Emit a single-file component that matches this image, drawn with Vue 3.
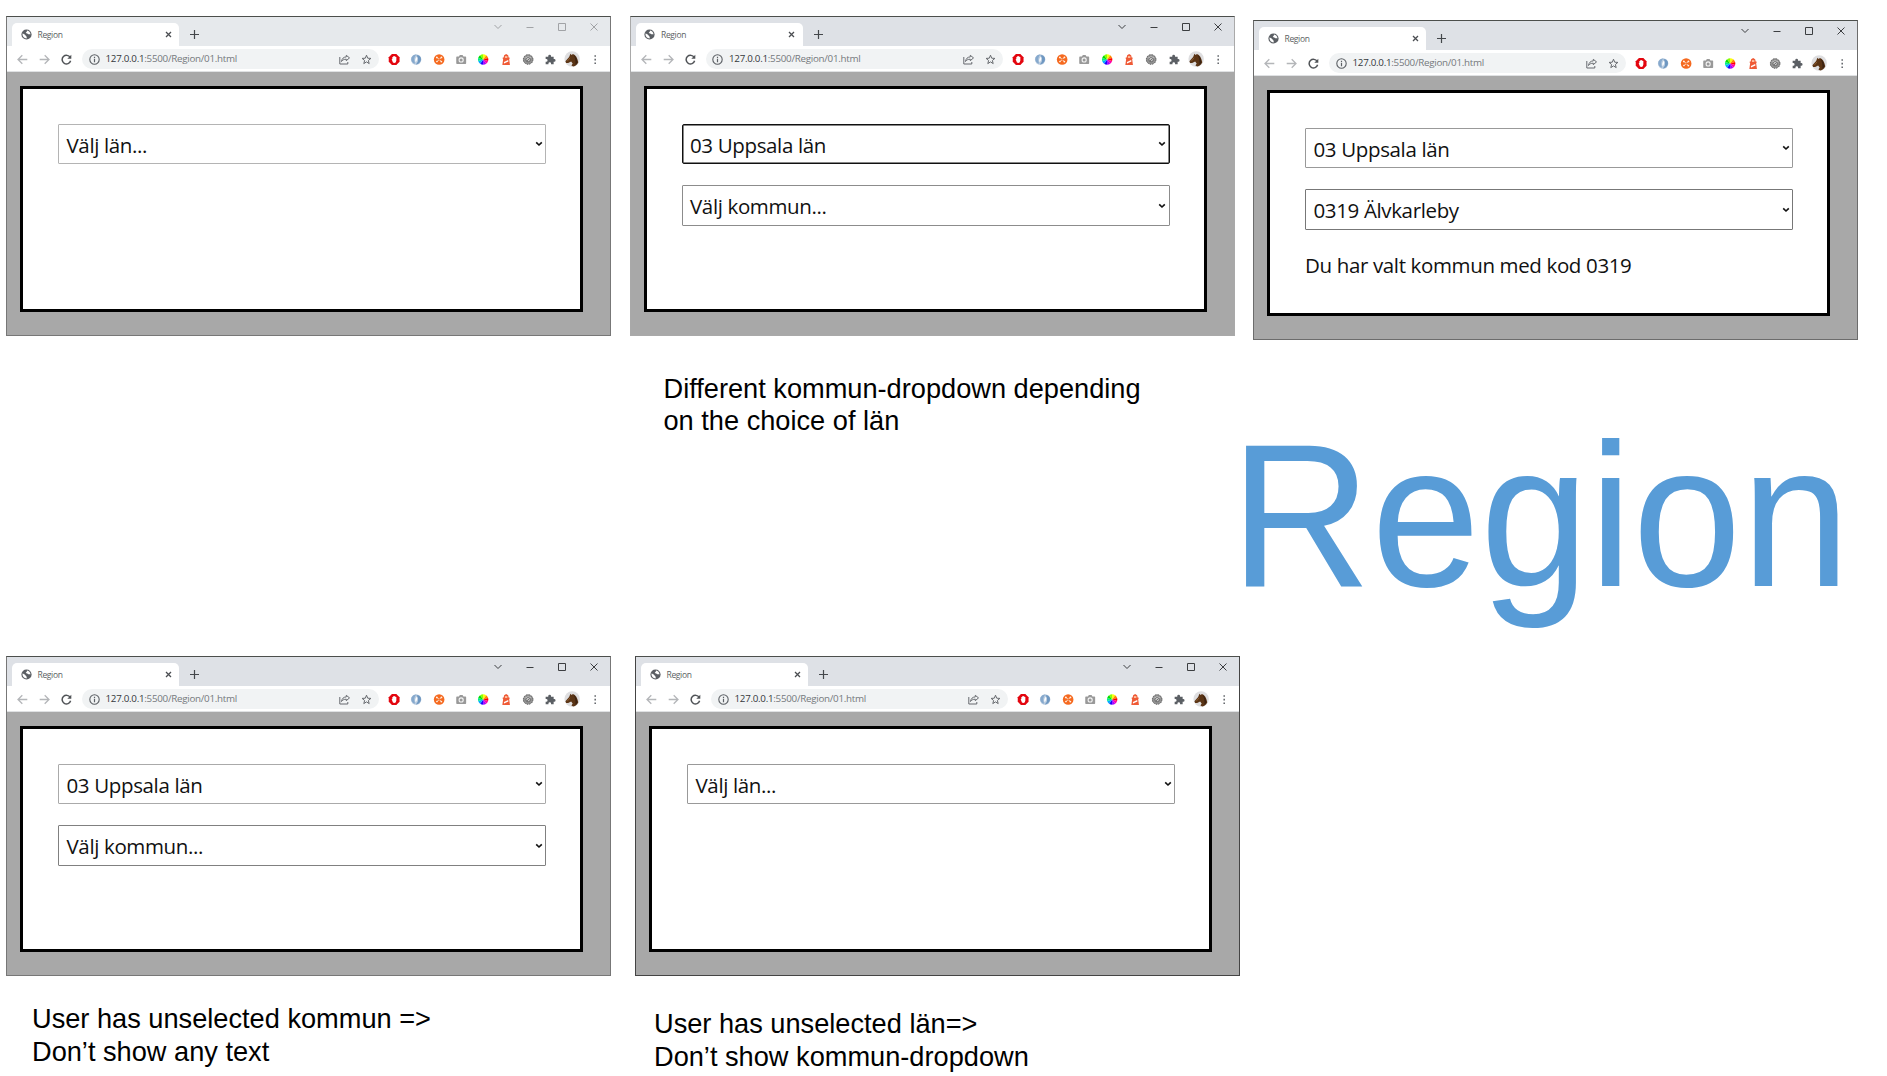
<script setup>
const windows = {
  start: { faded: true, edge: '#777', selects: [{ text: 'Välj län...', tone: '#b4b4b4' }] },
  lan: {
    edge: '#a9a9a9',
    selects: [
      { text: '03 Uppsala län', tone: '#101010', focus: true },
      { text: 'Välj kommun...', tone: '#8c8c8c' },
    ],
  },
  kommun: {
    edge: '#6c6c6c',
    selects: [
      { text: '03 Uppsala län', tone: '#999' },
      { text: '0319 Älvkarleby', tone: '#777' },
    ],
    message: 'Du har valt kommun med kod 0319',
  },
  noKommun: {
    edge: '#777',
    selects: [
      { text: '03 Uppsala län', tone: '#aaa' },
      { text: 'Välj kommun...', tone: '#808080' },
    ],
  },
  noLan: { edge: '#444', selects: [{ text: 'Välj län...', tone: '#999' }] },
}

const rows = [
  [
    { id: 'w1', win: windows.start },
    { id: 'w2', win: windows.lan, caption: ['Different kommun-dropdown depending', 'on the choice of län'] },
    { id: 'w3', win: windows.kommun, title: 'Region' },
  ],
  [
    { id: 'w4', win: windows.noKommun, caption: ['User has unselected kommun =>', 'Don’t show any text'] },
    { id: 'w5', win: windows.noLan, caption: ['User has unselected län=>', 'Don’t show kommun-dropdown'] },
  ],
]

const wheel = ['#ff0', '#f80', '#f00', '#f0a', '#a0f', '#20f', '#0af', '#0e8', '#0d0', '#8f0']
const wedge = (i) => {
  const p = (k) => {
    const a = (k / 10) * Math.PI * 2 - Math.PI / 2
    return `${(5.5 + 5.2 * Math.cos(a)).toFixed(2)} ${(5.5 + 5.2 * Math.sin(a)).toFixed(2)}`
  }
  return `M5.5 5.5L${p(i)}A5.2 5.2 0 0 1 ${p(i + 1)}Z`
}
</script>

<template>
  <main class="slide">
    <section v-for="(row, r) in rows" :key="r" class="row" :class="'row-' + (r + 1)">
      <figure v-for="item in row" :key="item.id" :class="item.id">
        <div class="window" :class="{ faded: item.win.faded }" :style="{ borderColor: item.win.edge }">
          <header class="tabs">
            <div class="tab">
              <svg class="globe" width="11" height="11" viewBox="0 0 11 11">
                <circle cx="5.5" cy="5.5" r="5.1" fill="#5a5e63" />
                <path d="M1.500 4.600C2.800 5 3.600 5.400 4.400 6.200c.7.6.5 1.200 1.300 1.400v1.900C3 9.500 1.300 7.300 1.500 4.600zM6 1.400c-.4 1 .2 1.200-.8 1.800-.7.4-.2 1 .5 1 .9.100.9.900 1.700 1.100.8.100 1.300-.1 2.100.1-.1-2.200-1.500-3.700-3.500-4z" fill="#fff" />
              </svg>
              <span class="tab-name">Region</span>
              <svg class="tab-close" width="7" height="7" viewBox="0 0 7 7"><path d="M1 1l5 5M6 1L1 6" stroke="#4b4e52" stroke-width="1.300" /></svg>
            </div>
            <svg class="plus" width="9" height="9" viewBox="0 0 9 9"><path d="M4.500 0v9M0 4.500h9" stroke="#44474b" stroke-width="1.200" /></svg>
            <div class="controls">
              <svg viewBox="0 0 10 10"><path d="M1.500 3l3.500 3.500L8.500 3" /></svg>
              <svg viewBox="0 0 10 10"><path d="M1.500 5.500h7" /></svg>
              <svg viewBox="0 0 10 10"><path d="M1.500 1.500h7v7h-7z" /></svg>
              <svg viewBox="0 0 10 10"><path d="M1.500 1.500l7 7M8.500 1.500l-7 7" /></svg>
            </div>
          </header>

          <nav class="toolbar">
            <div class="nav">
              <svg viewBox="0 0 11 11"><path d="M10.300 5.500H1M5.300 1.200L1 5.500l4.300 4.300" stroke="#b4b6b9" /></svg>
              <svg viewBox="0 0 11 11"><path d="M.7 5.500H10M5.700 1.200L10 5.500 5.700 9.800" stroke="#b4b6b9" /></svg>
              <svg viewBox="0 0 11 11"><path d="M9.200 3.500A4.300 4.300 0 1 0 9.600 6.800" stroke="#505357" stroke-width="1.500" /><path d="M10.300.7v4H6.300z" fill="#505357" stroke="none" /></svg>
            </div>
            <div class="address">
              <svg class="info" width="11" height="11" viewBox="0 0 11 11"><circle cx="5.500" cy="5.500" r="4.700" fill="none" stroke="#5c6065" stroke-width="1.100" /><path d="M5.500 4.800v3.400M5.500 2.700v1.200" stroke="#5c6065" stroke-width="1.200" /></svg>
              <span class="url"><b>127.0.0.1</b>:5500/Region/01.html</span>
              <svg class="share" width="11" height="11" viewBox="0 0 11 11"><path d="M.8 3v7h8V8" /><path d="M10.500 3.900L7.300 1.300v1.600C4.500 3 3 4.600 2.500 7.500 3.600 5.900 5 5.200 7.300 5.200v1.500z" /></svg>
              <svg class="star" width="11" height="11" viewBox="0 0 11 11"><path d="M5.500 1.200l1.200 3 3.200.2-2.500 2.100.8 3.100-2.700-1.700-2.700 1.700.8-3.100L1.100 4.400l3.200-.2z" /></svg>
            </div>
            <div class="extensions">
              <svg viewBox="0 0 11 11"><path d="M3.300.1h4.400l3.200 3.200v4.400l-3.200 3.200H3.300L.1 7.700V3.300z" fill="#e3060f" /><path d="M3 5.300L3.700 5V3h.8V2.300h.8V2h.7v.4h.9V3h.8v3.500L7 8.400 5.600 9 4.300 8.500z" fill="#fff" /></svg>
              <svg viewBox="0 0 11 11"><circle cx="5.500" cy="5.500" r="5.200" fill="#b9cce0" /><path d="M1 3.300A5 5 0 0 1 5.700.5C3.500 2.500 3.100 5.500 4.400 9.800 1.100 9 .1 6 1 3.300z" fill="#86a9cd" /><path d="M5.800 1c4 .2 5.200 3 4.300 5.800C9.300 9.300 7 10.400 5 10.400 8 8 8.200 4.900 5.800 1z" fill="#6e97c1" /><path d="M6.400 2.800C7.100 5 6.300 7 4.900 8.300 4.200 6 4.500 4.100 6.400 2.800z" fill="#fff" /></svg>
              <svg viewBox="0 0 11 11"><circle cx="5.500" cy="5.500" r="5.300" fill="#f5691f" /><path d="M3.200 3.200l4.600 4.600M7.800 3.200L3.200 7.800" stroke="#ffe5d2" stroke-width="1" /><circle cx="3.200" cy="3.400" r=".9" fill="#fff1e6" /><circle cx="7.800" cy="3.400" r=".9" fill="#fff1e6" /><circle cx="3.300" cy="7.600" r=".8" fill="#fff1e6" /><circle cx="7.700" cy="7.600" r=".9" fill="#fff1e6" /><circle cx="5.500" cy="5.500" r=".8" fill="#f5691f" /></svg>
              <svg viewBox="0 0 11 11"><path d="M1.300 2.500h2L4.200 1h2.700l.9 1.500h2q.7 0 .7.700v6q0 .7-.7.700H1.300q-.7 0-.7-.7v-6q0-.7.700-.7z" fill="#999" /><circle cx="5.500" cy="5.900" r="2.600" fill="#f4f4f4" /><circle cx="5.500" cy="5.900" r="1.500" fill="#999" /></svg>
              <svg viewBox="0 0 11 11"><path v-for="(c, i) in wheel" :key="c" :d="wedge(i)" :fill="c" /></svg>
              <svg viewBox="0 0 11 11"><path d="M3 3.400L3.500 1.200 5.500.1l2 1.100L8 3.400h.9v1.500H8.500l.8 6H1.700l.8-6H2.100V3.400z" fill="#ef5a36" /><path d="M4.300 2.300h2.400v1.500H4.300z" fill="#ffd9b8" /><path d="M3.300 7.900l4.200-2 .3 1.500-4.400 2z" fill="#fff" /></svg>
              <svg viewBox="0 0 11 11"><circle cx="5.500" cy="5.500" r="5.100" fill="#929292" /><circle cx="5.500" cy="5.500" r="4.800" fill="none" stroke="#5f5f5f" stroke-width="1" stroke-dasharray="1.300 1.200" /><path d="M2 4.300Q5.500.8 9 4.300z" fill="#ddd" /><circle cx="5.500" cy="5.600" r="2.200" fill="#c9c9c9" stroke="#555" stroke-width=".7" /><path d="M4.200 7l2.600-2.400" stroke="#555" stroke-width=".8" /></svg>
              <svg viewBox="0 0 11 11"><path d="M1 2.700h2.600V2.200a1.400 1.400 0 0 1 2.800 0v.5H9V5h.5a1.400 1.400 0 0 1 0 2.800H9v2.500H6.400V9.600a1.200 1.200 0 0 0-2.600 0v.7H1V7.700h.6a1.200 1.200 0 0 0 0-2.600H1z" fill="#5b5f64" /></svg>
              <svg class="avatar" viewBox="0 0 16 16"><circle cx="8" cy="8" r="7.700" fill="#dedee0" /><path d="M1.300 10.300L5 6 6.300 2.800 7.500 4l1.300-.9c2.700.8 4.500 4 5.300 8.200-.8 2.200-2.600 3.900-5 4.300L7.300 14.500 8.500 12.400 7 10.600 4 11.900 2 12z" fill="#5a3415" /><path d="M9.500 4c2.600 1.500 3.600 4.500 3.600 8L11.300 14c.4-4-.2-7.300-1.800-10z" fill="#3a2212" /><path d="M3 10.300l3-3.500" stroke="#8a5a2c" stroke-width="1" /></svg>
              <svg viewBox="0 0 11 11"><path d="M4.800 1.200h1.500v1.600H4.800zM4.800 4.800h1.500v1.600H4.800zM4.800 8.400h1.500V10H4.800z" fill="#5f6368" /></svg>
            </div>
          </nav>

          <div class="page">
            <div class="panel">
              <div v-for="(s, i) in item.win.selects" :key="i" class="select" :class="{ focus: s.focus, second: i === 1 }" :style="{ borderColor: s.tone }">
                <span>{{ s.text }}</span>
                <svg width="8" height="6" viewBox="0 0 8 6"><path d="M1.200 1.300L4 4l2.800-2.700" fill="none" stroke="#111" stroke-width="1.600" /></svg>
              </div>
              <p v-if="item.win.message" class="message">{{ item.win.message }}</p>
            </div>
          </div>
        </div>
        <figcaption v-if="item.caption">
          <span v-for="line in item.caption" :key="line">{{ line }}</span>
        </figcaption>
        <h1 v-if="item.title">{{ item.title }}</h1>
      </figure>
    </section>
  </main>
</template>

<style>
body {
  background: #fff;
}
</style>

<style scoped>
* {
  box-sizing: border-box;
}
svg {
  display: block;
  flex: none;
}
.slide {
  width: 1887px;
  height: 1076px;
  overflow: hidden;
  background: #fff;
}
.row {
  display: flex;
  align-items: flex-start;
  padding-left: 6px;
}
.row-1 {
  height: 656px;
  padding-top: 16px;
}
figure {
  margin: 0;
  width: 605px;
  flex: none;
}
.w2 {
  margin-left: 18.500px;
}
.w3 {
  margin: 4px 0 0 18.500px;
}
.w5 {
  margin-left: 24px;
}

.window {
  height: 320px;
  border: 1px solid #777;
  border-top-color: #4c4f4c !important;
  background: #fff;
  font-family: "Open Sans", "Noto Sans", sans-serif;
}
.tabs {
  height: 29px;
  display: flex;
  background: #dee1e6;
}
.faded .tabs {
  background: #e6e9ec;
}
.tab {
  width: 167px;
  height: 23px;
  margin: 6px 0 0 5px;
  padding: 0 7.500px 0 8.500px;
  border-radius: 5px 5px 0 0;
  background: #fff;
  display: flex;
  align-items: center;
}
.tab-name {
  margin-left: 6px;
  flex: 1;
  font-size: 8.500px;
  letter-spacing: -0.350px;
  line-height: 12px;
  color: #5c5f63;
}
.plus {
  margin: 13px 0 0 11px;
}
.controls {
  margin: 5px 11px 0 auto;
  display: flex;
  gap: 22px;
}
.controls svg {
  width: 10px;
  height: 10px;
  fill: none;
  stroke: #3c3e41;
  stroke-width: 1;
}
.faded .controls svg {
  stroke: #a1a3a6;
}
.toolbar {
  height: 26px;
  padding-top: 1px;
  display: flex;
  align-items: center;
  border-bottom: 1px solid #dfe1e3;
}
.nav {
  display: flex;
  gap: 11px;
  margin-left: 10px;
}
.nav svg {
  width: 11px;
  height: 11px;
  fill: none;
  stroke-width: 1.300;
}
.address {
  width: 298px;
  height: 20px;
  margin-left: 10px;
  padding: 0 7px 0 6.500px;
  border-radius: 10px;
  background: #f1f3f4;
  display: flex;
  align-items: center;
}
.url {
  flex: 1;
  margin-left: 6px;
  font-size: 9.800px;
  line-height: 14px;
  letter-spacing: -0.280px;
  white-space: nowrap;
  color: #75797d;
}
.url b {
  font-weight: 400;
  color: #35383c;
}
.share,
.star {
  fill: none;
  stroke: #66696e;
  stroke-width: 1;
}
.star {
  margin-left: 11px;
}
.extensions {
  flex: 1;
  margin: 0 4px 0 4px;
  display: flex;
  align-items: center;
}
.extensions svg {
  width: 22.300px;
  height: 11px;
}
.extensions .avatar {
  height: 16px;
}

.page {
  height: 263px;
  padding: 14px 0 0 13px;
  background: #a8a8a8;
}
.panel {
  width: 563px;
  height: 226px;
  padding: 35px 0 0 35px;
  border: 3px solid #000;
  background: #fff;
}
.select {
  width: 488px;
  height: 40px;
  padding: 0 2.500px 0 7.500px;
  border: 1px solid #999;
  border-radius: 1px;
  display: flex;
  align-items: center;
  justify-content: space-between;
}
.select.focus {
  border-radius: 2px;
  box-shadow: inset 0 0 0 0.500px #101010;
}
.select.second {
  height: 41px;
  margin-top: 21px;
}
.select span,
.message {
  font-size: 20.500px;
  line-height: 28px;
  letter-spacing: -0.360px;
  color: #111;
  white-space: nowrap;
}
.select span {
  padding-top: 1px;
}
.select svg {
  margin-bottom: 0;
}
.message {
  margin: 21px 0 0;
}

figcaption span {
  display: block;
  white-space: nowrap;
}
figcaption {
  font: 27.200px/33px "Liberation Sans", Arial, sans-serif;
  color: #000;
}
.w2 figcaption {
  margin: 37px 0 0 34px;
  line-height: 32px;
}
.w4 figcaption {
  margin: 26px 0 0 26px;
}
.w5 figcaption {
  margin: 31px 0 0 19px;
}
h1 {
  margin: 64.500px 0 0 -23px;
  font: 400 204.500px/220px "Liberation Sans", Arial, sans-serif;
  color: #589cd7;
  transform: scaleX(0.957);
  transform-origin: 0 0;
}
</style>
